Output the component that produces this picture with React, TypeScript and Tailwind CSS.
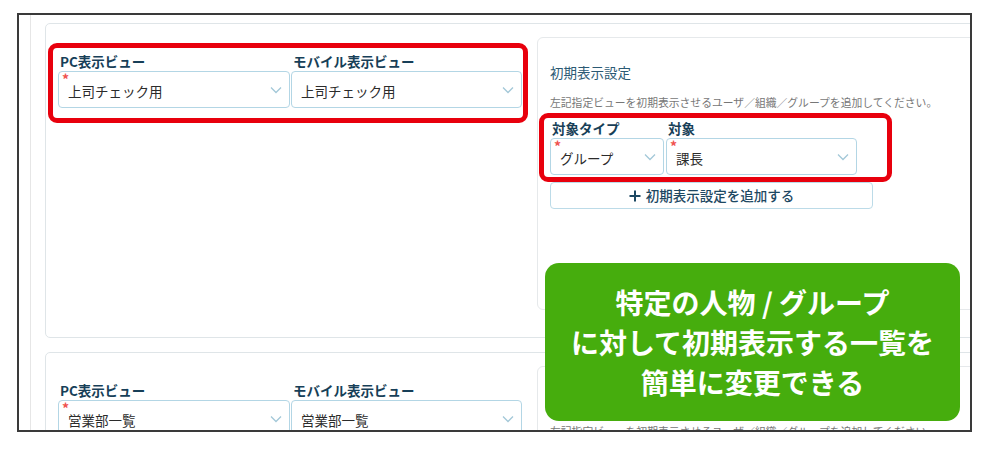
import React from 'react';

const font = { fontFamily: '"Noto Sans CJK JP", "Noto Sans", sans-serif' };

const Chevron = () => (
    <svg width="12" height="8" viewBox="0 0 12 8" className="shrink-0">
        <polyline points="1,1.5 6,6.5 11,1.5" fill="none" stroke="#a3c8d8" strokeWidth="1.3" />
    </svg>
);

const Select = ({ value, required, width }: { value: string; required?: boolean; width: string }) => (
    <div className={`relative flex h-[37px] items-center justify-between rounded-[4px] border border-[#b3d6e5] bg-white pl-[9px] pr-[7px] ${width}`}>
        {required && (
            <span className="absolute left-[3px] top-[1px] text-[14px] font-bold leading-[12px] text-[#f0524f]">*</span>
        )}
        <span className="pt-[2px] text-[13.5px] leading-[18px] text-[#2b2b2b]">{value}</span>
        <Chevron />
    </div>
);

const Label = ({ children, width }: { children: React.ReactNode; width: string }) => (
    <div className={`h-[20px] pl-[2px] text-[13.5px] font-bold leading-[20px] text-[#173f58] ${width}`}>{children}</div>
);

const ViewCard = ({ pc, mobile, type, target }: { pc: string; mobile: string; type: string; target: string }) => (
    <div className="flex h-[315px] w-[1000px] shrink-0 rounded-[5px] border border-[#dfe5e8] bg-white pl-[12px] pt-[13px]">
        {/* left: view selects */}
        <div className="flex w-[464px] shrink-0 flex-col pt-[14px]">
            <div className="flex gap-[1px]">
                <Label width="w-[232px]">PC表示ビュー</Label>
                <Label width="w-[231px]">モバイル表示ビュー</Label>
            </div>
            <div className="flex gap-[1px]">
                <Select value={pc} required width="w-[232px]" />
                <Select value={mobile} width="w-[231px]" />
            </div>
        </div>

        {/* right: initial display setting */}
        <div className="ml-[15px] h-[273px] flex-1 rounded-[6px] border border-[#e6e9eb] bg-white pl-[12px] pt-[25px]">
            <div className="text-[13.5px] leading-[18px] text-[#2b5a74]">初期表示設定</div>
            <div className="mt-[13px] text-[10.8px] leading-[16px] text-[#777777]">
                左記指定ビューを初期表示させるユーザ／組織／グループを追加してください。
            </div>
            <div className="mt-[8px] flex gap-[2px]">
                <Label width="w-[114px]">対象タイプ</Label>
                <Label width="w-[191px]">対象</Label>
            </div>
            <div className="flex gap-[2px]">
                <Select value={type} required width="w-[114px]" />
                <Select value={target} required width="w-[191px]" />
            </div>
            <button className="mt-[7px] flex h-[27px] w-[323px] items-center justify-center gap-[5px] rounded-[4px] border border-[#bcdbe8] bg-white text-[13.5px] font-medium text-[#1d4862]">
                <svg width="12" height="12" viewBox="0 0 12 12">
                    <path d="M6 0.5V11.5M0.5 6H11.5" stroke="#1d4862" strokeWidth="2" />
                </svg>
                初期表示設定を追加する
            </button>
        </div>
    </div>
);

export default function App() {
    return (
        <div className="relative h-[450px] w-[1000px] overflow-hidden bg-white" style={font}>
            {/* screenshot frame */}
            <div className="ml-[17px] mt-[13px] h-[419px] w-[955px] overflow-hidden border-2 border-[#3a3a3a] bg-white">
                <div className="h-full pl-[11px]">
                    <div className="flex h-full flex-col gap-[14px] border-l border-[#e6e6e6] pl-[14px] pt-[8px]">
                        <ViewCard pc="上司チェック用" mobile="上司チェック用" type="グループ" target="課長" />
                        <ViewCard pc="営業部一覧" mobile="営業部一覧" type="グループ" target="課長" />
                    </div>
                </div>
            </div>

            {/* highlight boxes */}
            <div className="absolute left-[48px] top-[43px] h-[80px] w-[480px] rounded-[9px] border-[5px] border-[#e8000d]" />
            <div className="absolute left-[539px] top-[113px] h-[69px] w-[353px] rounded-[9px] border-[5px] border-[#e8000d]" />

            {/* callout */}
            <div className="absolute left-[545px] top-[263px] flex h-[158px] w-[415px] flex-col items-center justify-center rounded-[14px] bg-[#46ad0d] text-center text-[28px] font-bold leading-[40px] text-white">
                <div>特定の人物 / グループ</div>
                <div>に対して初期表示する一覧を</div>
                <div>簡単に変更できる</div>
            </div>
        </div>
    );
}
